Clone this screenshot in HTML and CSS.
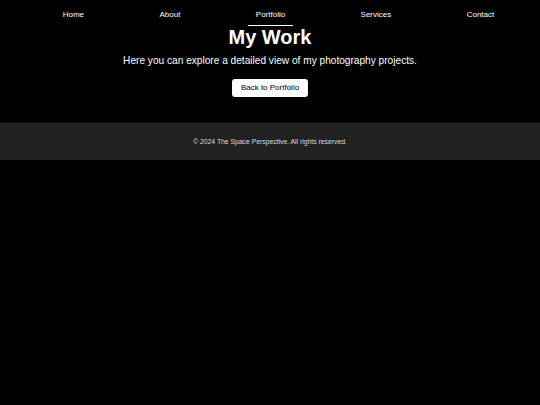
FILE: index.html
```html
<!DOCTYPE html>
<html lang="en">
<head>
<meta charset="utf-8">
<title>My Work - The Space Perspective</title>
<link rel="stylesheet" href="styles.css">
</head>
<body>
<header class="site-header">
  <nav>
    <ul class="nav-list">
      <li><a href="#">Home</a></li>
      <li><a href="#">About</a></li>
      <li><a href="#" class="active">Portfolio</a></li>
      <li><a href="#">Services</a></li>
      <li><a href="#">Contact</a></li>
    </ul>
  </nav>
</header>
<main class="work">
  <h1 class="work-title">My Work</h1>
  <p class="work-lead">Here you can explore a detailed view of my photography projects.</p>
  <a href="#" class="btn-back">Back to Portfolio</a>
</main>
<footer class="site-footer">
  <p>&copy; 2024 The Space Perspective. All rights reserved.</p>
</footer>
</body>
</html>
```
FILE: styles.css
```css
html, body {
  margin: 0;
  padding: 0;
  background: #000;
  color: #fff;
  font-family: "Liberation Sans", Arial, sans-serif;
}

.nav-list {
  display: flex;
  justify-content: space-around;
  list-style: none;
  margin: 0;
  padding: 10px 8px 0 25px;
}

.nav-list a {
  display: block;
  color: #fff;
  text-decoration: none;
  font-size: 8px;
  padding: 0 8px 6px;
  border-bottom: 1px solid transparent;
}

.nav-list a.active {
  border-bottom-color: #fff;
}

.work {
  display: flex;
  flex-direction: column;
  align-items: center;
  text-align: center;
}

.work-title {
  margin: 0;
  font-size: 20px;
  font-weight: bold;
}

.work-lead {
  margin: 5.5px 0 0;
  font-size: 10.15px;
}

.btn-back {
  margin-top: 13px;
  background: #fff;
  color: #000;
  text-decoration: none;
  font-size: 8px;
  padding: 4px 9px;
  border-radius: 3px;
  line-height: 10px;
}

.site-footer {
  margin-top: 26px;
  background: #222;
  height: 37px;
  display: flex;
  align-items: center;
  justify-content: center;
}

.site-footer p {
  margin: 0;
  font-size: 6.8px;
  color: #ddd;
}
```
